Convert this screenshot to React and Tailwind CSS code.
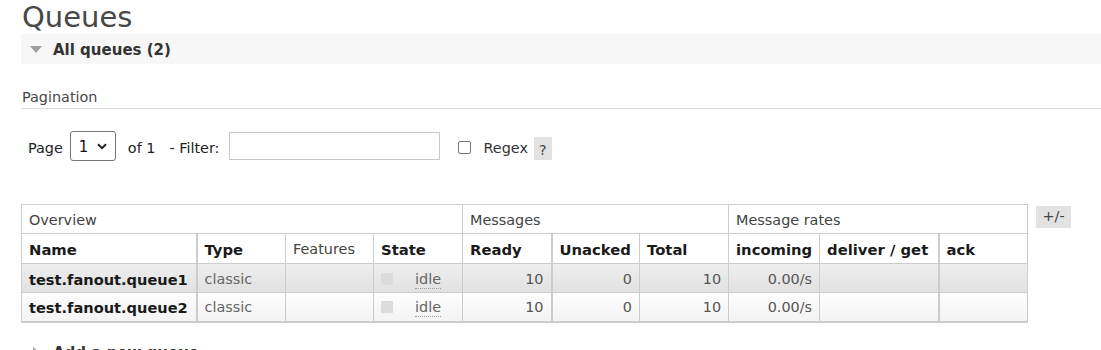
import React from "react";

const rows = [
  { name: "test.fanout.queue1", alt: "bg-linear-to-b from-[#eeeeee] to-[#e1e1e1]" },
  { name: "test.fanout.queue2", alt: "bg-linear-to-b from-[#fdfdfd] to-[#f3f3f3]" },
];

const DownTriangle = () => (
  <svg width="12" height="7" viewBox="0 0 12 7" className="shrink-0">
    <path d="M0 0 L12 0 L6 7 Z" fill="#a0a0a0" />
  </svg>
);

const RightTriangle = () => (
  <svg width="7" height="12" viewBox="0 0 7 12" className="shrink-0">
    <path d="M0 0 L7 6 L0 12 Z" fill="#a0a0a0" />
  </svg>
);

const App = () => {
  const cell = "border border-[#cccccc] pl-[7px] pr-[7px] pt-[3px] h-[29px] align-middle";
  const head = `${cell} h-[30px] text-left font-bold text-[14.8px]`;

  return (
    <div className="w-[1101px] h-[350px] overflow-hidden bg-white font-['DejaVu_Sans',Verdana,sans-serif] text-[14.4px] text-[#444]">
      <div className="pl-[21px]">
        {/* Title */}
        <h1 className="pl-px text-[29px] leading-[34px] text-[#484848] font-normal">
          Queues
        </h1>

        {/* All queues section header */}
        <div className="h-[30px] bg-[#f7f7f7] flex items-center pl-[9px] gap-[11px]">
          <DownTriangle />
          <span className="pt-[2px] text-[15px] font-bold text-[#333]">All queues (2)</span>
        </div>

        {/* Pagination */}
        <h3 className="mt-[24px] pl-px leading-[18px] pb-[2px] border-b border-[#dddddd] text-[#484848]">
          Pagination
        </h3>

        <div className="mt-[22px] h-[30px] flex items-start pl-[7px] leading-[18px] text-[#222]">
          <span className="mt-[8px]">Page</span>
          <div className="ml-[7px] w-[46px] h-[30px] border border-[#767676] rounded-[3px] flex items-center justify-between pl-[8px] pr-[8px] text-[#111]">
            <span className="pt-[2px] text-[15px]">1</span>
            <svg width="10" height="7" viewBox="0 0 10 7">
              <path d="M1 1.2 L5 5.2 L9 1.2" fill="none" stroke="#222" strokeWidth="2" />
            </svg>
          </div>
          <span className="mt-[8px] ml-[12px]">of 1</span>
          <span className="mt-[8px] ml-[14px]">- Filter:</span>
          <div className="mt-px ml-[10px] w-[211px] h-[28px] border border-[#c8c8c8] bg-white" />
          <div className="mt-[10px] ml-[18px] w-[13px] h-[13px] border border-[#767676] rounded-[2px] bg-white" />
          <span className="mt-[8px] ml-[12px] text-[#333]">Regex</span>
          <span className="mt-[6px] ml-[6px] w-[18px] h-[23px] pt-[2px] bg-[#e2e2e2] flex items-center justify-center text-[#444]">
            ?
          </span>
        </div>

        {/* Queue table */}
        <div className="mt-[43px] flex items-start">
          <table className="table-fixed border-collapse w-[1006px] border-b-2 border-b-[#cccccc]">
            <colgroup>
              <col className="w-[175px]" />
              <col className="w-[89px]" />
              <col className="w-[88px]" />
              <col className="w-[89px]" />
              <col className="w-[89px]" />
              <col className="w-[88px]" />
              <col className="w-[89px]" />
              <col className="w-[91px]" />
              <col className="w-[119px]" />
              <col className="w-[89px]" />
            </colgroup>
            <thead>
              <tr>
                <th colSpan={4} className={`${cell} text-left font-normal text-[#444]`}>
                  Overview
                </th>
                <th colSpan={3} className={`${cell} text-left font-normal text-[#444]`}>
                  Messages
                </th>
                <th colSpan={3} className={`${cell} text-left font-normal text-[#444]`}>
                  Message rates
                </th>
              </tr>
              <tr className="text-[#1a1a1a]">
                <th className={`${head} border-r-2`}>Name</th>
                <th className={head}>Type</th>
                <th className={`${cell} h-[30px] text-left font-normal text-[#444]`}>Features</th>
                <th className={head}>State</th>
                <th className={`${head} border-r-2`}>Ready</th>
                <th className={head}>Unacked</th>
                <th className={head}>Total</th>
                <th className={head}>incoming</th>
                <th className={`${head} border-r-2 whitespace-nowrap`}>deliver / get</th>
                <th className={head}>ack</th>
              </tr>
            </thead>
            <tbody>
              {rows.map((row) => (
                <tr key={row.name} className={row.alt}>
                  <td className={`${cell} pl-[6px] text-[14.6px] font-bold text-[#1a1a1a] border-r-2 whitespace-nowrap`}>
                    {row.name}
                  </td>
                  <td className={`${cell} text-[#666]`}>classic</td>
                  <td className={cell}></td>
                  <td className={cell}>
                    <div className="flex items-center">
                      <span className="-mt-[2px] w-[12px] h-[12px] bg-[#dcdcdc]" />
                      <span className="ml-[22px] text-[#666] leading-[17px] border-b border-dotted border-[#999]">
                        idle
                      </span>
                    </div>
                  </td>
                  <td className={`${cell} text-right text-[#555] border-r-2`}>10</td>
                  <td className={`${cell} text-right text-[#555]`}>0</td>
                  <td className={`${cell} text-right text-[#555]`}>10</td>
                  <td className={`${cell} text-right text-[#555]`}>0.00/s</td>
                  <td className={`${cell} border-r-2`}></td>
                  <td className={cell}></td>
                </tr>
              ))}
            </tbody>
          </table>
          <span className="ml-[8px] mt-[2px] w-[35px] h-[22px] bg-[#e2e2e2] flex items-center justify-center text-[#444]">
            +/-
          </span>
        </div>

        {/* Add a new queue (collapsed) */}
        <div className="mt-[15px] h-[30px] flex items-center pl-[12px] gap-[13px]">
          <RightTriangle />
          <span className="pt-[2px] text-[15px] font-bold text-[#333]">Add a new queue</span>
        </div>
      </div>
    </div>
  );
};

export default App;
